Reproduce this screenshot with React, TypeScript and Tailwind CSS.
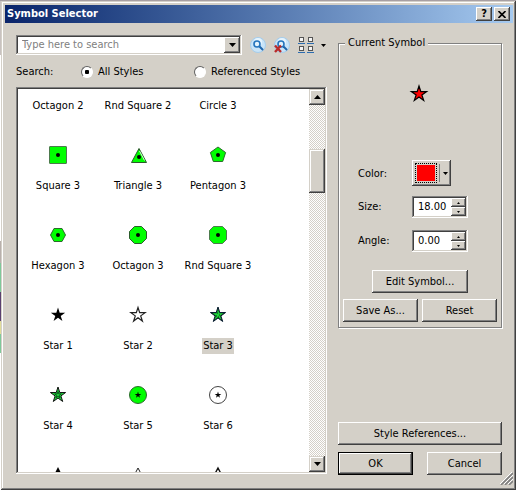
import { useState } from "react";
import type { ReactNode } from "react";

const raised =
  "bg-[#d4d0c8] shadow-[inset_-1px_-1px_0_#404040,inset_1px_1px_0_#fff,inset_-2px_-2px_0_#808080]";
const scrollRaised =
  "bg-[#d4d0c8] shadow-[inset_-1px_-1px_0_#404040,inset_1px_1px_0_#d4d0c8,inset_-2px_-2px_0_#808080,inset_2px_2px_0_#fff]";
const sunken =
  "bg-white p-[2px] shadow-[inset_-1px_-1px_0_#fff,inset_1px_1px_0_#808080,inset_-2px_-2px_0_#d4d0c8,inset_2px_2px_0_#404040]";

function Arrow({ up = false, size = 7 }: { up?: boolean; size?: number }) {
  const h = (size + 1) / 2;
  const points = up ? `0,${h} ${size},${h} ${size / 2},0` : `0,0 ${size},0 ${size / 2},${h}`;
  return (
    <svg width={size} height={h} viewBox={`0 0 ${size} ${h}`} aria-hidden="true">
      <polygon points={points} fill="#000" />
    </svg>
  );
}

function regular(n: number, r: number, start = -90) {
  return Array.from({ length: n }, (_, i) => {
    const a = ((start + (i * 360) / n) * Math.PI) / 180;
    return `${(13 + r * Math.cos(a)).toFixed(2)},${(13 + r * Math.sin(a)).toFixed(2)}`;
  }).join(" ");
}

function starPoints(r: number) {
  return Array.from({ length: 10 }, (_, i) => {
    const a = ((-90 + i * 36) * Math.PI) / 180;
    const d = i % 2 ? r * 0.38 : r;
    return `${(13 + d * Math.cos(a)).toFixed(2)},${(13 + d * Math.sin(a)).toFixed(2)}`;
  }).join(" ");
}

function Glyph({ children }: { children: ReactNode }) {
  return (
    <svg width="26" height="26" viewBox="0 0 26 26" aria-hidden="true">
      {children}
    </svg>
  );
}

const dot = <circle cx="13" cy="13" r="2" fill="#000" />;

const symbols: { name: string; art: ReactNode }[] = [
  { name: "Octagon 2", art: null },
  { name: "Rnd Square 2", art: null },
  { name: "Circle 3", art: null },
  {
    name: "Square 3",
    art: <><rect x="4.5" y="4.5" width="17" height="17" rx="0.5" fill="#0f0" stroke="#4d7a4d" />{dot}</>,
  },
  {
    name: "Triangle 3",
    art: (
      <>
        <polygon points="14,6.5 21.5,20.5 6.5,20.5" fill="#0f0" stroke="#2c5a2c" />
        <path d="M14.5 9 L19.5 18.5" stroke="#d8f5d8" />
        <circle cx="14" cy="15" r="2" fill="#000" />
      </>
    ),
  },
  {
    name: "Pentagon 3",
    art: <><polygon points={regular(5, 8)} fill="#0f0" stroke="#2c6a2c" />{dot}</>,
  },
  {
    name: "Hexagon 3",
    art: <><polygon points="9,6.5 17,6.5 20.5,13 17,19.5 9,19.5 5.5,13" fill="#0f0" stroke="#2c6a2c" />{dot}</>,
  },
  {
    name: "Octagon 3",
    art: <><polygon points="9.5,4.5 16.5,4.5 21.5,9.5 21.5,16.5 16.5,21.5 9.5,21.5 4.5,16.5 4.5,9.5" fill="#0f0" stroke="#2c5a2c" />{dot}</>,
  },
  {
    name: "Rnd Square 3",
    art: <><polygon points="8.5,4.5 17.5,4.5 21.5,8.5 21.5,17.5 17.5,21.5 8.5,21.5 4.5,17.5 4.5,8.5" fill="#0f0" stroke="#4d7a4d" />{dot}</>,
  },
  { name: "Star 1", art: <polygon points={starPoints(7.5)} fill="#000" /> },
  { name: "Star 2", art: <polygon points={starPoints(7.5)} fill="#fff" stroke="#222" strokeWidth="1.2" /> },
  {
    name: "Star 3",
    art: (
      <>
        <polygon points={starPoints(8)} fill="#0b3d1c" stroke="#081c30" />
        <polygon points={starPoints(5.5)} fill="#1fd63c" />
        <path d="M12 11h1M14 13h1M11 14h1M13 15h1" stroke="#053a10" />
      </>
    ),
  },
  {
    name: "Star 4",
    art: (
      <>
        <polygon points={starPoints(8)} fill="#1fd63c" stroke="#111" />
        <polygon points={starPoints(3.5)} fill="#1fd63c" stroke="#0b5a1c" />
      </>
    ),
  },
  {
    name: "Star 5",
    art: <><circle cx="13" cy="13" r="8.5" fill="#0f0" stroke="#2c6a2c" /><polygon points={starPoints(3.5)} fill="#000" /></>,
  },
  {
    name: "Star 6",
    art: <><circle cx="13" cy="13" r="8.5" fill="#fff" stroke="#444" /><polygon points={starPoints(3.5)} fill="#000" /></>,
  },
];

const nextRow: ReactNode[] = [
  <polygon points="13,4 22,22 4,22" fill="#000" />,
  <polygon points="13,5 22,22 4,22" fill="#fff" stroke="#222" />,
  <polygon points="13,5 22,22 4,22" fill="#fff" stroke="#111" strokeWidth="1.4" />,
];

function Magnifier({ clear = false }: { clear?: boolean }) {
  return (
    <svg width="18" height="18" viewBox="0 0 18 18" aria-hidden="true">
      <circle cx="9" cy="9" r="7.5" fill="#c9e4f8" stroke="#a5cdec" />
      <circle cx="9" cy="6" r="4" fill="#e6f4fd" />
      <path d="M10.5 10.5 L13.5 13.5" stroke="#1f66ad" strokeWidth="2" strokeLinecap="round" />
      <circle cx="8" cy="8" r="3" fill="#e3f3fd" stroke="#2474bd" strokeWidth="1.6" />
      {clear && <path d="M2 9.5 L8 16 M8 9.5 L2 16" stroke="#b92a2a" strokeWidth="2.4" />}
    </svg>
  );
}

function ViewIcon() {
  return (
    <svg width="18" height="18" viewBox="0 0 18 18" aria-hidden="true">
      {[1, 10].map((x) =>
        [1, 10].map((y) => (
          <g key={`${x}-${y}`}>
            <rect x={x + 1.5} y={y + 0.5} width="4" height="4" fill="#f4f4f4" stroke="#555" />
            <path d={`M${x} ${y + 6.5} h7`} stroke="#2b6cb0" />
          </g>
        )),
      )}
    </svg>
  );
}

function Radio({ label, checked, onChange }: { label: string; checked: boolean; onChange: () => void }) {
  return (
    <label className="flex items-center gap-[5px]">
      <input
        type="radio"
        name="styles"
        checked={checked}
        onChange={onChange}
        className="size-3 appearance-none rounded-full border border-t-[#606060] border-r-white border-b-white border-l-[#606060] bg-white checked:bg-[radial-gradient(circle,#000_2px,#fff_2.5px)]"
      />
      {label}
    </label>
  );
}

function Spinner({ id, label, initial }: { id: string; label: string; initial: number }) {
  const [value, setValue] = useState(initial.toFixed(2));
  const step = (d: number) => setValue((Number(value) + d).toFixed(2));
  const btn = `flex h-[9px] w-[15px] items-center justify-center ${raised}`;
  return (
    <div className="flex items-center">
      <label htmlFor={id} className="w-[54px]">{label}</label>
      <div className={`flex h-[22px] w-14 ${sunken}`}>
        <input
          id={id}
          value={value}
          onChange={(e) => setValue(e.target.value)}
          className="w-0 min-w-0 flex-1 pl-1 outline-none"
        />
        <div className="flex flex-col">
          <button type="button" aria-label={`${label} up`} className={btn} onClick={() => step(1)}>
            <Arrow up size={3} />
          </button>
          <button type="button" aria-label={`${label} down`} className={btn} onClick={() => step(-1)}>
            <Arrow size={3} />
          </button>
        </div>
      </div>
    </div>
  );
}

function PushButton({ children, className = "" }: { children: ReactNode; className?: string }) {
  return (
    <button type="button" className={`flex h-[23px] items-center justify-center ${raised} ${className}`}>
      {children}
    </button>
  );
}

export default function App() {
  const [scope, setScope] = useState("all");
  const [selected, setSelected] = useState("Star 3");

  return (
    <div className="flex h-screen min-h-[400px] bg-[#a79fa3] pt-px font-['DejaVu_Sans_Condensed','DejaVu_Sans',sans-serif] text-[11px] leading-4 text-black">
      <div className="flex w-px flex-col bg-white">
        <div className="h-[54px] bg-[#c8c2c0]" />
        <div className="h-[186px]" />
        <div className="h-[22px] bg-[#b8b0ac]" />
        <div className="h-[29px] bg-[#7fc99a]" />
        <div className="h-[29px] bg-[#5a4070]" />
        <div className="h-[13px] bg-[#e0dc9a]" />
        <div className="h-[19px] bg-[#7fc99a]" />
      </div>
      <main className="relative flex min-w-0 flex-1 flex-col bg-[#d4d0c8] pt-1 pr-[3px] pb-[2px] pl-1 shadow-[inset_-1px_-1px_0_#404040,inset_1px_1px_0_#d4d0c8,inset_-2px_-2px_0_#808080,inset_2px_2px_0_#fff]">
        <header className="flex h-[18px] items-center bg-linear-to-r from-[#0a246a] to-[#a6caf0] pr-[3px] pl-[2px]">
          <h1 className="flex-1 font-bold text-white">Symbol Selector</h1>
          <div className="flex gap-[2px]">
            <button type="button" aria-label="Help" className={`flex h-[14px] w-4 items-center justify-center leading-3 font-bold ${raised}`}>
              ?
            </button>
            <button type="button" aria-label="Close" className={`flex h-[14px] w-4 items-center justify-center ${raised}`}>
              <svg width="8" height="7" viewBox="0 0 8 7" aria-hidden="true">
                <path d="M0.5 0 L7.5 7 M7.5 0 L0.5 7" stroke="#000" strokeWidth="1.6" />
              </svg>
            </button>
          </div>
        </header>

        <div className="flex min-h-0 flex-1 gap-[11px] px-[11px] pt-3">
          <section className="flex min-w-0 flex-1 flex-col pb-[14px]">
            <div className="flex items-center">
              <div className={`flex h-5 min-w-0 flex-1 ${sunken}`}>
                <input
                  type="text"
                  aria-label="Search symbols"
                  placeholder="Type here to search"
                  className="min-w-0 flex-1 pl-1 outline-none placeholder:text-[#808080]"
                />
                <button type="button" aria-label="Search history" className={`flex w-4 items-center justify-center ${raised}`}>
                  <Arrow />
                </button>
              </div>
              <div className="flex items-center gap-[6px] pr-px pl-[7px]">
                <button type="button" aria-label="Search"><Magnifier /></button>
                <button type="button" aria-label="Clear search"><Magnifier clear /></button>
                <button type="button" aria-label="View" className="flex items-center gap-[6px]">
                  <ViewIcon />
                  <Arrow size={5} />
                </button>
              </div>
            </div>

            <div className="mt-[9px] flex h-4 items-center">
              <span className="w-[65px]">Search:</span>
              <div className="w-[113px]">
                <Radio label="All Styles" checked={scope === "all"} onChange={() => setScope("all")} />
              </div>
              <Radio label="Referenced Styles" checked={scope === "ref"} onChange={() => setScope("ref")} />
            </div>

            <div className={`mt-[7px] flex min-h-0 flex-1 ${sunken}`}>
              <div className="min-w-0 flex-1 overflow-hidden">
                <div className="-mt-[54px] grid grid-cols-[repeat(3,80px)]">
                  {symbols.map((s) => (
                    <button
                      key={s.name}
                      type="button"
                      onClick={() => setSelected(s.name)}
                      className="flex h-20 flex-col items-center justify-end gap-[10px] pb-px"
                    >
                      <Glyph>{s.art}</Glyph>
                      <span className={`px-px whitespace-nowrap ${selected === s.name ? "bg-[#d4d0c8]" : ""}`}>{s.name}</span>
                    </button>
                  ))}
                  {nextRow.map((art, i) => (
                    <div key={i} className="flex h-20 justify-center pt-7">
                      <Glyph>{art}</Glyph>
                    </div>
                  ))}
                </div>
              </div>
              <div className="flex w-4 flex-col bg-[repeating-conic-gradient(#fff_0_25%,#d4d0c8_0_50%)] bg-[length:2px_2px]">
                <button type="button" aria-label="Scroll up" className={`flex h-4 items-center justify-center ${scrollRaised}`}>
                  <Arrow up />
                </button>
                <div className="flex-1 pt-11">
                  <div className={`h-11 ${scrollRaised}`} />
                </div>
                <button type="button" aria-label="Scroll down" className={`flex h-4 items-center justify-center ${scrollRaised}`}>
                  <Arrow />
                </button>
              </div>
            </div>
          </section>

          <aside className="flex w-[164px] flex-col pb-[13px]">
            <fieldset className="border border-[#808080] px-1 pb-[5px] shadow-[1px_1px_0_#fff,inset_1px_1px_0_#fff]">
              <legend className="ml-[2px] bg-[#d4d0c8] px-[3px]">Current Symbol</legend>
              <div className="flex h-[85px] items-center justify-center pr-[2px]">
                <Glyph>
                  <polygon points={starPoints(8)} fill="#f00" stroke="#000" strokeWidth="1.2" />
                </Glyph>
              </div>
              <div className="flex flex-col gap-3 pt-6 pl-[15px]">
                <div className="-mb-[2px] flex items-center">
                  <span id="color-label" className="w-[54px] pt-[2px]">Color:</span>
                  <button type="button" aria-labelledby="color-label" className={`flex h-[26px] w-[39px] items-center pl-[3px] ${raised}`}>
                    <span className="h-5 w-[22px] border border-dotted border-black p-px">
                      <span className="block h-full bg-[#f00]" />
                    </span>
                    <span className="mr-[3px] ml-[2px] h-[18px] w-px bg-[#808080]" />
                    <Arrow size={5} />
                  </button>
                </div>
                <Spinner id="size" label="Size:" initial={18} />
                <Spinner id="angle" label="Angle:" initial={0} />
              </div>
              <div className="flex justify-center pt-[18px] pb-[6px]">
                <PushButton className="w-24">Edit Symbol...</PushButton>
              </div>
              <div className="grid grid-cols-2 gap-1">
                <PushButton>Save As...</PushButton>
                <PushButton>Reset</PushButton>
              </div>
            </fieldset>

            <div className="mt-auto flex flex-col gap-[7px]">
              <PushButton className="w-full">Style References...</PushButton>
              <div className="flex justify-between">
                <PushButton className="w-[75px] border border-black">OK</PushButton>
                <PushButton className="w-[75px]">Cancel</PushButton>
              </div>
            </div>
          </aside>
        </div>
        <svg className="absolute right-[3px] bottom-[5px]" width="13" height="13" viewBox="0 0 13 13" aria-hidden="true">
          <path d="M1 13 L13 1 M5 13 L13 5 M9 13 L13 9" stroke="#808080" strokeWidth="1.6" />
          <path d="M0 12 L12 0 M4 12 L13 3 M8 12 L13 7" stroke="#fff" />
        </svg>
      </main>
    </div>
  );
}
